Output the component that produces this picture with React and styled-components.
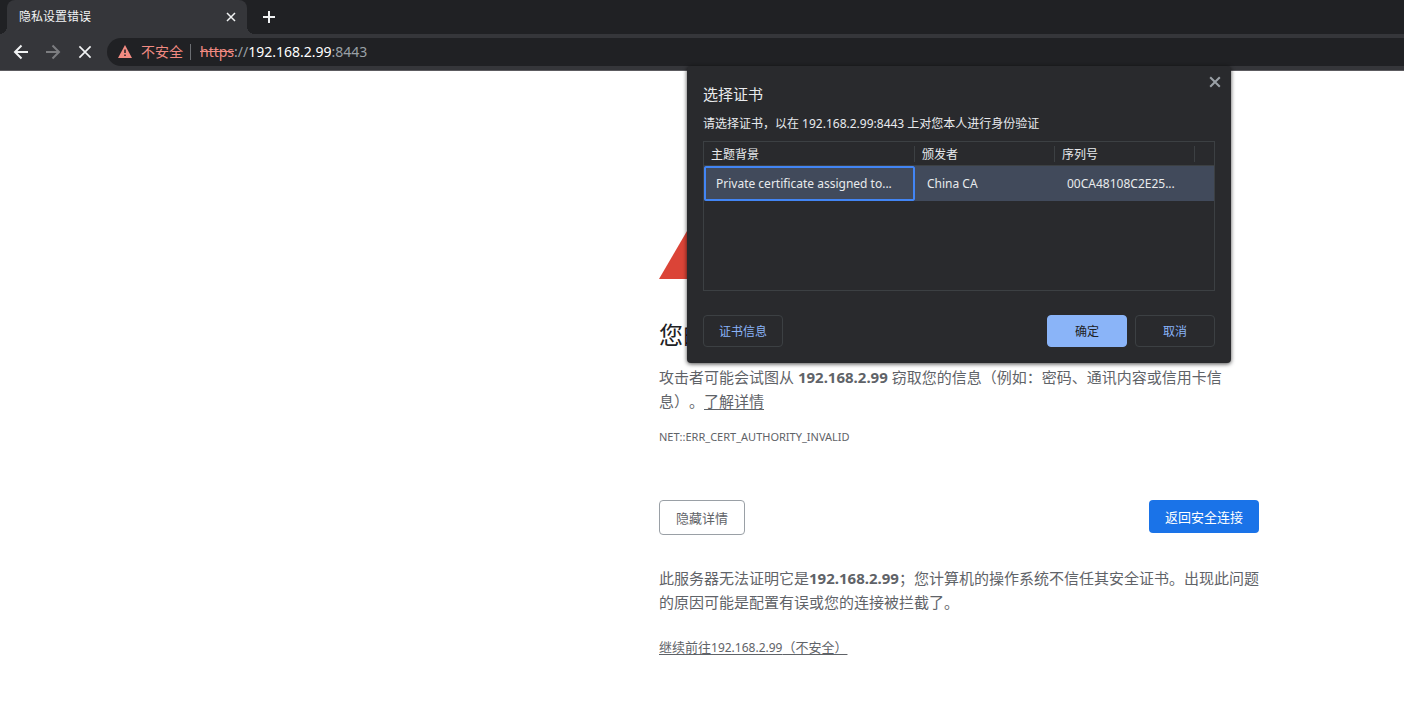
import styled, {createGlobalStyle} from "styled-components";

const GlobalStyle = createGlobalStyle`
  * {
    box-sizing: border-box;
  }
  body {
    margin: 0;
    background: #fff;
    color: #5f6368;
    font-family: "Noto Sans", "Noto Sans CJK SC", sans-serif;
    font-size: 15px;
    line-height: 24px;
    text-spacing-trim: space-all;
  }
  button, input {
    font-family: inherit;
  }
`;

const Browser = styled.div`
  position: relative;
  min-height: 100vh;
  overflow-x: hidden;
`;

const TabStrip = styled.div`
  display: flex;
  align-items: stretch;
  height: 34px;
  padding-left: 7px;
  background: #202124;
`;

const Tab = styled.div`
  position: relative;
  display: flex;
  align-items: center;
  justify-content: space-between;
  width: 240px;
  padding: 0 10px 0 12px;
  border-radius: 8px 8px 0 0;
  background: #35363a;
  color: #f1f3f4;
  font-size: 12px;
  line-height: 16px;
  &::before, &::after {
    content: "";
    position: absolute;
    bottom: 0;
    width: 8px;
    height: 8px;
  }
  &::before {
    right: 100%;
    background: radial-gradient(circle at 0 0, transparent 8px, #35363a 8px);
  }
  &::after {
    left: 100%;
    background: radial-gradient(circle at 100% 0, transparent 8px, #35363a 8px);
  }
`;

const IconButton = styled.button`
  display: flex;
  align-items: center;
  justify-content: center;
  width: ${props => props.$size}px;
  height: ${props => props.$size}px;
  padding: 0;
  border: 0;
  background: none;
  color: ${props => props.$color || "#f1f3f4"};
  svg {
    display: block;
    fill: none;
    stroke: currentColor;
    stroke-width: 2;
  }
`;

const NewTab = styled(IconButton)`
  align-self: center;
  margin-left: 8px;
`;

const Toolbar = styled.div`
  display: flex;
  align-items: center;
  height: 37px;
  padding: 0 0 1px 5px;
  border-bottom: 1px solid #5c5b60;
  background: #35363a;
`;

const Omnibox = styled.div`
  display: flex;
  flex: 1;
  align-items: center;
  height: 28px;
  margin-left: 6px;
  padding-left: 11px;
  border-radius: 14px 0 0 14px;
  background: #202124;
  color: #9aa0a6;
  font-size: 14px;
  line-height: 20px;
`;

const Insecure = styled.span`
  display: flex;
  align-items: center;
  gap: 9px;
  margin-right: 9px;
  padding-right: 7px;
  color: #f28b82;
  border-right: 1px solid #6b6e72;
  line-height: 16px;
`;

const Scheme = styled.s`
  color: #f28b82;
`;

const Host = styled.span`
  color: #fff;
`;

const Content = styled.main`
  max-width: 600px;
  margin: 0 145px 0 auto;
  padding-top: 160px;
`;

const Warning = styled.svg`
  display: block;
  width: 56px;
  height: 48px;
  margin-bottom: 40px;
`;

const Title = styled.h1`
  margin: 0 0 14px;
  color: #202124;
  font-size: 24px;
  font-weight: 400;
  line-height: 32px;
`;

const Paragraph = styled.p`
  margin: 0;
`;

const TextLink = styled.a`
  color: inherit;
  text-decoration: underline;
  text-underline-offset: 2px;
`;

const ErrorCode = styled.div`
  margin-top: 12px;
  font-size: 11px;
`;

const Actions = styled.div`
  display: flex;
  align-items: flex-start;
  justify-content: space-between;
  margin: 51px 0 31px;
`;

const PageButton = styled.button`
  height: ${props => props.$primary ? 33 : 35}px;
  padding: 0 16px;
  border: ${props => props.$primary ? "0" : "1px solid #9aa0a6"};
  border-radius: 4px;
  background: ${props => props.$primary ? "#1a73e8" : "#fff"};
  color: ${props => props.$primary ? "#fff" : "#5f6368"};
  font-size: 13px;
  line-height: 16px;
`;

const Proceed = styled.p`
  margin: 21px 0 0;
  font-size: 13px;
`;

const SmallNumber = styled.span`
  font-size: 12px;
`;

const Dialog = styled.section`
  position: absolute;
  top: 66px;
  right: 173px;
  width: 544px;
  padding: 16px;
  border-radius: 4px;
  background: #292a2d;
  box-shadow: 0 1px 4px rgba(0, 0, 0, .7);
  color: #e8eaed;
  font-size: 12px;
  line-height: 16px;
`;

const CloseDialog = styled(IconButton)`
  position: absolute;
  top: 8px;
  right: 8px;
`;

const DialogTitle = styled.h2`
  margin: 0;
  font-size: 15px;
  font-weight: 400;
  line-height: 24px;
`;

const DialogText = styled.p`
  margin: 10px 0 9px;
`;

const CertBox = styled.div`
  height: 150px;
  margin-bottom: 24px;
  border: 1px solid #3c4043;
`;

const CertTable = styled.table`
  width: 100%;
  table-layout: fixed;
  border-collapse: separate;
  border-spacing: 0;
`;

const HeadCell = styled.th`
  height: 24px;
  padding: 0;
  font-weight: 400;
  text-align: left;
  border-bottom: 1px solid #3c4043;
  span {
    display: block;
    height: 16px;
    padding-left: 7px;
    border-right: ${props => props.$last ? "0" : "1px solid #3c4043"};
    line-height: 18px;
  }
`;

const Cell = styled.td`
  height: 35px;
  padding: 0 12px;
  background: #414a5b;
  box-shadow: ${props => props.$focused ? "inset 0 0 0 2px #4285f4" : "none"};
  border-radius: ${props => props.$focused ? "2px" : "0"};
  white-space: nowrap;
`;

const DialogActions = styled.div`
  display: flex;
  gap: 8px;
`;

const DialogButton = styled.button`
  width: 80px;
  height: 32px;
  padding: 2px 0 0;
  margin-right: ${props => props.$first ? "auto" : "0"};
  border: 1px solid ${props => props.$primary ? "#8ab4f8" : "#3c4043"};
  border-radius: 4px;
  background: ${props => props.$primary ? "#8ab4f8" : "transparent"};
  color: ${props => props.$primary ? "#202124" : "#8ab4f8"};
  font-size: 12px;
  line-height: 16px;
`;

const columns = [
  {name: "主题背景", width: 211},
  {name: "颁发者", width: 140},
  {name: "序列号", width: 140},
];

const certificates = [
  ["Private certificate assigned to...", "China CA", "00CA48108C2E25..."],
];

function Cross({size, weight}) {
  return (
    <svg width={size} height={size} viewBox="0 0 10 10" aria-hidden="true">
      <path d="M1 1l8 8M9 1L1 9" strokeWidth={weight}/>
    </svg>
  );
}

function BrowserBar() {
  return (
    <header>
      <TabStrip>
        <Tab>
          隐私设置错误
          <IconButton $size={12} aria-label="关闭标签页"><Cross size={10} weight={1.5}/></IconButton>
        </Tab>
        <NewTab $size={28} aria-label="新标签页">
          <svg width="12" height="12" viewBox="0 0 12 12"><path d="M6 0v12M0 6h12"/></svg>
        </NewTab>
      </TabStrip>
      <Toolbar>
        <IconButton $size={32} aria-label="后退">
          <svg width="16" height="16" viewBox="0 0 16 16"><path d="M15 8H2.5M8.5 1.5L2 8l6.5 6.5"/></svg>
        </IconButton>
        <IconButton $size={32} $color="#7c7d80" aria-label="前进">
          <svg width="16" height="16" viewBox="0 0 16 16"><path d="M1 8h12.5M7.5 1.5L14 8l-6.5 6.5"/></svg>
        </IconButton>
        <IconButton $size={32} aria-label="停止加载"><Cross size={14} weight={1.2}/></IconButton>
        <Omnibox>
          <Insecure>
            <svg width="14" height="13" viewBox="0 0 14 13" aria-hidden="true">
              <path d="M7 0l7 13H0z" fill="#f28b82"/>
              <path d="M7 4.500v3.500M7 9.500V11" stroke="#202124" strokeWidth="1.5"/>
            </svg>
            不安全
          </Insecure>
          <span><Scheme>https</Scheme>://<Host>192.168.2.99</Host>:8443</span>
        </Omnibox>
      </Toolbar>
    </header>
  );
}

function CertificateDialog() {
  return (
    <Dialog role="dialog" aria-labelledby="cert-title">
      <CloseDialog $size={16} $color="#9aa0a6" aria-label="关闭"><Cross size={12} weight={1.7}/></CloseDialog>
      <DialogTitle id="cert-title">选择证书</DialogTitle>
      <DialogText>请选择证书，以在 192.168.2.99:8443 上对您本人进行身份验证</DialogText>
      <CertBox>
        <CertTable>
          <colgroup>
            {columns.map(c => <col key={c.name} width={c.width}/>)}
            <col/>
          </colgroup>
          <thead>
            <tr>
              {columns.map(c => <HeadCell key={c.name}><span>{c.name}</span></HeadCell>)}
              <HeadCell $last><span/></HeadCell>
            </tr>
          </thead>
          <tbody>
            {certificates.map(row => (
              <tr key={row[2]}>
                {row.map((value, i) => <Cell key={value} $focused={i === 0}>{value}</Cell>)}
                <Cell/>
              </tr>
            ))}
          </tbody>
        </CertTable>
      </CertBox>
      <DialogActions>
        <DialogButton $first>证书信息</DialogButton>
        <DialogButton $primary>确定</DialogButton>
        <DialogButton>取消</DialogButton>
      </DialogActions>
    </Dialog>
  );
}

export default function App() {
  return (
    <Browser>
      <GlobalStyle/>
      <BrowserBar/>
      <Content>
        <Warning viewBox="0 0 56 48" aria-hidden="true">
          <path d="M28 0l28 48H0z" fill="#db4437"/>
        </Warning>
        <Title>您的连接不是私密连接</Title>
        <Paragraph>
          攻击者可能会试图从 <strong>192.168.2.99</strong> 窃取您的信息（例如：密码、通讯内容或信用卡信息）。<TextLink href="#">了解详情</TextLink>
        </Paragraph>
        <ErrorCode>NET::ERR_CERT_AUTHORITY_INVALID</ErrorCode>
        <Actions>
          <PageButton>隐藏详情</PageButton>
          <PageButton $primary>返回安全连接</PageButton>
        </Actions>
        <Paragraph>
          此服务器无法证明它是<strong>192.168.2.99</strong>；您计算机的操作系统不信任其安全证书。出现此问题的原因可能是配置有误或您的连接被拦截了。
        </Paragraph>
        <Proceed>
          <TextLink href="#">继续前往<SmallNumber>192.168.2.99</SmallNumber>（不安全）</TextLink>
        </Proceed>
      </Content>
      <CertificateDialog/>
    </Browser>
  );
}
